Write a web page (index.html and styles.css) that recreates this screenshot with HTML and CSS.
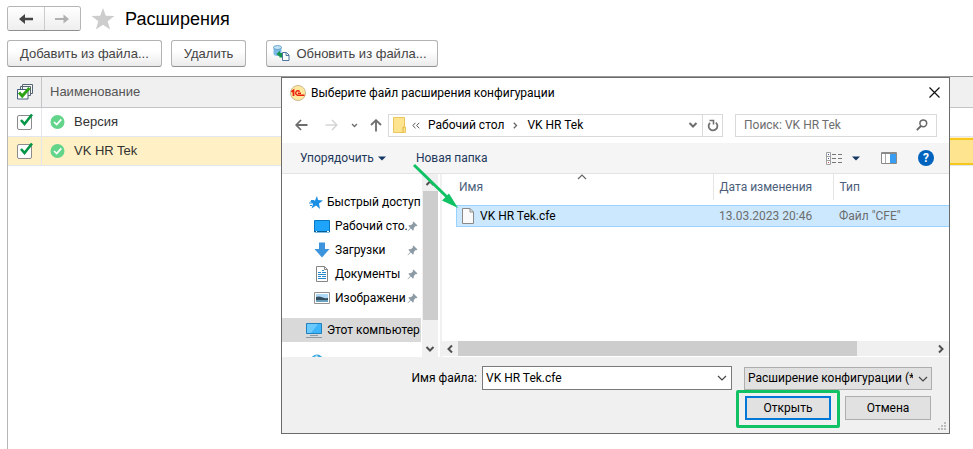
FILE: index.html
```html
<!DOCTYPE html>
<html lang="ru">
<head>
<meta charset="utf-8">
<title>Расширения</title>
<link rel="stylesheet" href="styles.css">
</head>
<body>
<svg class="defs" aria-hidden="true">
  <symbol id="tick" viewBox="0 0 18 18"><path d="M4 8 7.500 12 15 2.500" fill="none" stroke="#009646" stroke-width="2.6"/></symbol>
  <symbol id="ok" viewBox="0 0 14 14"><circle cx="7" cy="7" r="7" fill="#62d58b"/><path d="M3.500 7 6.200 9.600 10.800 4.400" fill="none" stroke="#fff" stroke-width="1.7"/></symbol>
  <symbol id="pin" viewBox="0 0 12 12"><path d="M7 0.500 11.500 5 10 5.800 9.400 5.500 7.500 7.600 7.200 10 6.300 10.300 4.200 8.200 1 11.300.5 10.900 3.600 7.500 1.600 5.500 2.200 4.700 4.600 4.400 6.500 2.500 6.200 1.600Z" fill="#8d9ba5"/></symbol>
  <symbol id="chev" viewBox="0 0 10 10"><path d="M1 3 5 7 9 3" fill="none" stroke="currentColor" stroke-width="1.200"/></symbol>
  <symbol id="bold-chev" viewBox="0 0 10 10"><path d="M1.500 3 5 6.500 8.500 3" fill="none" stroke="currentColor" stroke-width="2"/></symbol>
</svg>

<main class="page">
  <header class="heading">
    <div class="history">
      <button class="history-btn" aria-label="Назад"><svg width="16" height="12" viewBox="0 0 16 12"><path d="M1 6 7 1V4.800H15V7.200H7V11Z" fill="#444"/></svg></button>
      <button class="history-btn" aria-label="Вперёд"><svg width="16" height="12" viewBox="0 0 16 12"><path d="M15 6 9.500 1.500V5H1V7H9.500V10.500Z" fill="#b0b0b0"/></svg></button>
    </div>
    <svg class="star" width="24" height="22" viewBox="0 0 24 22"><path d="M12 0 14.800 7.800 23.500 8 16.700 13.300 19.100 21.500 12 16.700 4.900 21.500 7.300 13.300.5 8 9.200 7.800Z" fill="#cdcdcd"/></svg>
    <h1>Расширения</h1>
  </header>

  <div class="commands">
    <button class="command">Добавить из файла...</button>
    <button class="command">Удалить</button>
    <button class="command command-update">
      <svg width="17" height="17" viewBox="0 0 17 17"><path d="M.5 2.500V9C1 11.500 8 11.500 8.500 9V2.500Z" fill="#7ab9e6"/><ellipse cx="4.500" cy="2.500" rx="4" ry="2" fill="#c1e3f7" stroke="#5694be" stroke-width=".8"/><path d="M3.500 9 7 5.800V8H9V12.500H6.500V10.500H7V12Z" fill="#14944a"/><path d="M9.500 7.500H13.500L16 10V15.500H9.500Z" fill="#fff" stroke="#50759d"/><path d="M13 7.500V10.500H16" fill="none" stroke="#50759d"/></svg>
      Обновить из файла...
    </button>
  </div>

  <table class="extensions">
    <thead>
      <tr>
        <th class="col-check"><svg width="16" height="16" viewBox="0 0 16 16"><path d="M5.500 5V.5H15.500V9.500H13M3.500 5V2.500H13.500V11.500H11" fill="#f5f5f5" stroke="#566673"/><path d="M.5 5.500H11V15H.5Z" fill="#fff" stroke="#435c79"/><path d="M2 8.500 5.200 12 12.500 4" fill="none" stroke="#2fa316" stroke-width="3"/></svg></th>
        <th class="col-name">Наименование</th>
        <th></th>
      </tr>
    </thead>
    <tbody>
      <tr>
        <td class="col-check"><label class="check"><input type="checkbox" checked aria-label="Версия"><svg class="tick"><use href="#tick"/></svg></label></td>
        <td class="col-name"><span class="named"><svg class="ok"><use href="#ok"/></svg>Версия</span></td>
        <td></td>
      </tr>
      <tr class="selected">
        <td class="col-check"><label class="check"><input type="checkbox" checked aria-label="VK HR Tek"><svg class="tick"><use href="#tick"/></svg></label></td>
        <td class="col-name"><span class="named"><svg class="ok"><use href="#ok"/></svg>VK HR Tek</span></td>
        <td class="current"></td>
      </tr>
    </tbody>
  </table>
</main>

<section class="dialog" role="dialog" aria-labelledby="dialog-title">
  <header class="titlebar">
    <svg width="16" height="16" viewBox="0 0 16 16"><circle cx="8" cy="8" r="7.500" fill="#ffe9a0" stroke="#cdb98e"/><path d="M1.300 6.800 3.500 5.400V11" fill="none" stroke="#e8200c" stroke-width="1.800"/><path d="M9.600 6.600A2.200 2.200 0 1 0 7.800 10.200H14.500M7.800 8.300H11" fill="none" stroke="#e8200c" stroke-width="1.400"/></svg>
    <h2 id="dialog-title">Выберите файл расширения конфигурации</h2>
    <button class="close" aria-label="Закрыть"><svg width="11" height="11" viewBox="0 0 11 11"><path d="M.5.5 10.500 10.500M10.500.5.5 10.500" stroke="#111" stroke-width="1.200"/></svg></button>
  </header>

  <nav class="location">
    <button class="plain" aria-label="Назад"><svg width="13" height="12" viewBox="0 0 13 12"><path d="M12.500 6H1.500M6 1 1.200 6 6 11" fill="none" stroke="#6d6d6d" stroke-width="1.800"/></svg></button>
    <button class="plain" aria-label="Вперёд"><svg width="13" height="12" viewBox="0 0 13 12"><path d="M.5 6H11.500M7 1 11.800 6 7 11" fill="none" stroke="#d5d5d5" stroke-width="1.600"/></svg></button>
    <button class="plain recent" aria-label="Недавние"><svg width="7" height="7"><use href="#bold-chev"/></svg></button>
    <button class="plain" aria-label="Вверх"><svg width="12" height="13" viewBox="0 0 12 13"><path d="M6 12.500V1.500M1 6 6 1.200 11 6" fill="none" stroke="#6d6d6d" stroke-width="1.800"/></svg></button>
    <div class="address">
      <svg width="13" height="16" viewBox="0 0 13 16"><path d="M.5.5H11.500V9.500L12.500 10V15.500H.5Z" fill="#ffe48f" stroke="#eac65d"/><path d="M10 15.500V10H12" fill="none" stroke="#dcb23f"/></svg>
      <svg class="crumbs-more" width="8" height="7" viewBox="0 0 8 7"><path d="M3.500.8.8 3.500 3.500 6.200M7.300.8 4.600 3.500 7.300 6.200" fill="none" stroke="#555"/></svg>
      <a href="#">Рабочий стол</a>
      <svg width="5" height="7" viewBox="0 0 5 7"><path d="M.8.8 3.500 3.500.8 6.200" fill="none" stroke="#666" stroke-width="1.300"/></svg>
      <a href="#">VK HR Tek</a>
      <button class="plain address-drop" aria-label="Показать путь"><svg width="10" height="10"><use href="#bold-chev"/></svg></button>
      <button class="plain refresh" aria-label="Обновить"><svg width="12" height="13" viewBox="0 0 12 13"><path d="M3 3.800A4.400 4.400 0 1 0 8.800 3.600" fill="none" stroke="#707070" stroke-width="1.800"/><path d="M2.500 1.500H6.500V5.500" fill="none" stroke="#707070" stroke-width="1.600"/></svg></button>
    </div>
    <div class="search">
      <input type="text" placeholder="Поиск: VK HR Tek" aria-label="Поиск: VK HR Tek">
      <svg width="12" height="12" viewBox="0 0 12 12"><circle cx="7.300" cy="4.300" r="3.400" fill="none" stroke="#666" stroke-width="1.500"/><path d="M5 7 .8 11.200" stroke="#666" stroke-width="1.800"/></svg>
    </div>
  </nav>

  <div class="toolbar">
    <button class="plain tool">Упорядочить <svg width="8" height="5" viewBox="0 0 8 5"><path d="M0 .5H8L4 4.500Z" fill="#153763"/></svg></button>
    <button class="plain tool">Новая папка</button>
    <span class="toolbar-end">
      <button class="plain view" aria-label="Вид"><svg width="16" height="13" viewBox="0 0 16 13"><path d="M.5.5H4.500V12.500H.5ZM.5 4.500H4.500M.5 8.500H4.500" fill="#fff" stroke="#a0a0a0"/><path d="M2 2.500H3M2 6.500H3" stroke="#345fa8"/><path d="M2 10.500H3" stroke="#c43"/><path d="M6 2.500H10M12 2.500H16M6 6.500H10M12 6.500H16M6 10.500H10M12 10.500H16" stroke="#777"/></svg><svg width="8" height="5" viewBox="0 0 8 5"><path d="M0 .5H8L4 4.500Z" fill="#153763"/></svg></button>
      <button class="plain" aria-label="Область просмотра"><svg width="16" height="12" viewBox="0 0 16 12"><path d="M.5.5H15.500V11.500H.5Z" fill="#fff" stroke="#8a8a8a"/><path d="M0 1.500H16" stroke="#8a8a8a"/><path d="M4.500 2V11" stroke="#aaa"/><path d="M9 2H15V11H9Z" fill="#399df2"/></svg></button>
      <button class="plain help" aria-label="Справка">?</button>
    </span>
  </div>

  <div class="browser">
    <ul class="tree">
      <li class="node"><svg width="14" height="13" viewBox="0 0 14 13"><path d="M8 0 9 4 14 4.500 10 7.500 11 13 7 9.500 2.500 12.500 4 8 1 5 6 4.500Z" fill="#1a8fe3"/><path d="M0 7H3M1 9.500H3M2 4.500H5" stroke="#1a8fe3"/></svg>Быстрый доступ</li>
      <li class="node child"><svg width="16" height="13" viewBox="0 0 16 13"><path d="M.5.5H15.500V12H.5Z" fill="#1ea5fb" stroke="#0877bf"/><path d="M0 11.500H16" stroke="#075e98"/><path d="M2 11.500H3M13 11.500H15" stroke="#fff"/></svg><span>Рабочий сто.</span><svg class="pin"><use href="#pin"/></svg></li>
      <li class="node child"><svg width="16" height="16" viewBox="0 0 16 16"><path d="M5 .5H11V7H15.500L8 15.500.5 7H5Z" fill="#3b94dc"/></svg><span>Загрузки</span><svg class="pin"><use href="#pin"/></svg></li>
      <li class="node child"><svg width="16" height="16" viewBox="0 0 16 16"><path d="M2.500.5H10.500L13.500 3.500V15.500H2.500Z" fill="#fff" stroke="#858585"/><path d="M10.500.5V3.500H13.500" fill="none" stroke="#858585"/><path d="M4 6.500H7M8 4.500H10M8 6.500H12M4 8.500H12M4 10.500H7M8 10.500H12M4 12.500H12" stroke="#2788cc"/></svg><span>Документы</span><svg class="pin"><use href="#pin"/></svg></li>
      <li class="node child"><svg width="16" height="12" viewBox="0 0 16 12"><path d="M.5.5H15.500V11.500H.5Z" fill="#fff" stroke="#929292"/><path d="M2 2H14V6H2Z" fill="#afd9f4"/><path d="M2 5C6 3 9 7 14 6V8H2Z" fill="#344e60"/><path d="M2 8H14V10H2Z" fill="#68a0bd"/></svg><span>Изображени</span><svg class="pin"><use href="#pin"/></svg></li>
      <li class="node computer"><svg width="16" height="15" viewBox="0 0 16 15"><path d="M.5.5H15.500V10.500H.5Z" fill="#3eb5fb" stroke="#2181be"/><path d="M1 1H12L5 10H1Z" fill="#6cc9fc"/><path d="M4 12.500H12M0 14.500H16" stroke="#8a9ba7"/></svg>Этот компьютер</li>
      <li class="node network"><svg width="16" height="16" viewBox="0 0 16 16"><circle cx="8" cy="7" r="6.500" fill="#37a6dd"/><path d="M4 4 8 1 10 5 7 7Z" fill="#c5eaf7"/></svg></li>
    </ul>
    <div class="vscroll" aria-hidden="true">
      <svg class="up" width="10" height="10"><use href="#bold-chev"/></svg>
      <span class="vthumb"></span>
      <svg width="10" height="10"><use href="#bold-chev"/></svg>
    </div>
    <div class="listing">
      <table class="files">
        <thead><tr><th class="f-name">Имя<svg class="sort" width="10" height="10"><use href="#chev"/></svg></th><th class="f-date">Дата изменения</th><th class="f-type">Тип</th></tr></thead>
        <tbody><tr>
          <td><span class="file"><svg width="12" height="16" viewBox="0 0 12 16"><path d="M.5.5H8L11.500 4V15.500H.5Z" fill="#fafafa" stroke="#8a8a8a"/><path d="M8 .5V4H11.500" fill="none" stroke="#8a8a8a"/></svg>VK HR Tek.cfe</span></td>
          <td class="f-date"><span class="value">13.03.2023 20:46</span></td><td class="f-type"><span class="value">Файл "CFE"</span></td>
        </tr></tbody>
      </table>
      <div class="hscroll" aria-hidden="true">
        <svg class="left" width="10" height="10"><use href="#bold-chev"/></svg>
        <span class="htrack"><span class="hthumb"></span></span>
        <svg class="right" width="10" height="10"><use href="#bold-chev"/></svg>
      </div>
    </div>
  </div>

  <footer class="footer">
    <div class="choice">
      <label for="filename">Имя файла:</label>
      <div class="combo"><input id="filename" type="text" value="VK HR Tek.cfe"><button class="plain" aria-label="Показать список"><svg width="10" height="10"><use href="#chev"/></svg></button></div>
      <div class="filter"><select aria-label="Тип файла"><option>Расширение конфигурации (*</option></select><svg width="10" height="10"><use href="#chev"/></svg></div>
    </div>
    <div class="actions">
      <span class="highlight"><button class="action primary">Открыть</button></span>
      <button class="action">Отмена</button>
    </div>
    <svg class="grip" width="9" height="9" viewBox="0 0 9 9"><path d="M7 0H9V2H7ZM4 3H6V5H4ZM7 3H9V5H7ZM1 6H3V8H1ZM4 6H6V8H4ZM7 6H9V8H7Z" fill="#bcbcbc"/></svg>
  </footer>
  <svg class="pointer" width="48" height="48" viewBox="0 0 48 48"><path d="M2 2 36 35" stroke="#10c264" stroke-width="3"/><path d="M46 45 30 37.500 37 30.500Z" fill="#10c264"/></svg>
</section>
</body>
</html>
```
FILE: styles.css
```css
* { box-sizing: border-box; }
body { margin: 0; background: #fff; font: 13px/18px "Liberation Sans", Arial, sans-serif; color: #333; overflow: hidden; }
button, input, select { font: inherit; color: inherit; margin: 0; }
svg { flex: none; display: block; }
h1, h2 { margin: 0; font-weight: normal; }
.defs { position: absolute; width: 0; height: 0; }

.page { display: flex; flex-direction: column; height: 100vh; padding: 6px 0 0 7px; }
.heading { display: flex; align-items: center; height: 25px; }
.history { display: flex; border: 1px solid #b5b5b5; border-bottom-color: #8f8f8f; border-radius: 3px; width: 74px; height: 25px; overflow: hidden; }
.history-btn { flex: 1; display: flex; align-items: center; justify-content: center; padding: 0; border: 0; background: linear-gradient(#fff, #eee); }
.history-btn + .history-btn { border-left: 1px solid #ccc; }
.star { margin: 0 10px; }
h1 { font-size: 18px; line-height: 24px; color: #000; }
.commands { display: flex; gap: 9px; margin-top: 9px; }
.command { display: flex; align-items: center; justify-content: center; gap: 6px; height: 27px; padding: 0 12px; border: 1px solid #b3b3b3; border-bottom-color: #8f8f8f; border-radius: 3px; background: linear-gradient(#fff 40%, #ebebeb); color: #444; white-space: nowrap; }
.command-update { margin-left: 11px; padding: 0 10px 0 6px; }

.extensions { flex: 1; display: block; margin-top: 9px; border-collapse: collapse; border-top: 1px solid #999; border-left: 1px solid #b5b5b5; }
.extensions thead, .extensions tbody { display: block; }
.extensions tr { display: grid; grid-template-columns: 34px 1fr 1fr; height: 29px; border-bottom: 1px solid #e3e6ec; }
.extensions thead tr { height: 31px; background: #f0f0f0; border-color: #c4c4c4; }
.extensions th, .extensions td { display: flex; align-items: center; padding: 0; font-weight: normal; }
.extensions .col-check { justify-content: center; border-right: 1px solid #e3e6ec; }
.extensions th.col-check { border-color: #c4c4c4; }
.extensions .col-name { padding-left: 8px; color: #333; }
.extensions th.col-name { color: #555; }
.selected { background: #fff1c5; }
.extensions .current { margin-top: 1px; background: #ffe48f; border: 2px solid #f8c71d; border-right: 0; }
.named { display: flex; align-items: center; gap: 9px; }
.ok { width: 15px; height: 14px; }
.check { position: relative; display: flex; }
.check input { appearance: none; width: 15px; height: 15px; border: 1px solid #8b8b8b; border-radius: 2px; background: #fff; }
.tick { position: absolute; left: 0; top: -3px; width: 18px; height: 18px; }

.dialog { position: absolute; left: 281px; right: 23px; top: 77px; display: flex; flex-direction: column; border: 1px solid #6b6b6b; background: #fff; color: #000; font: 12px/16px Roboto, "Noto Sans", sans-serif; }
.plain { display: flex; align-items: center; justify-content: center; padding: 0; border: 0; background: none; }
.titlebar { display: flex; align-items: center; gap: 5px; height: 29px; padding: 0 9px 0 8px; }
h2 { font-size: 12px; line-height: 16px; white-space: nowrap; }
.close { display: flex; margin-left: auto; padding: 0; border: 0; background: none; }
.location { display: flex; align-items: center; height: 36px; padding: 0 12px 0 13px; color: #6d6d6d; }
.location > .plain + .plain { margin-left: 17px; }
.location > .recent + .plain { margin-left: 12px; }
.location > .plain.recent { margin-left: 13px; }
.address { flex: 1; display: flex; align-items: center; gap: 9px; height: 23px; margin-left: 6px; padding-left: 4px; border: 1px solid #d9d9d9; white-space: nowrap; }
.address a { color: #000; text-decoration: none; }
.crumbs-more { margin: 0 -1px 0 -3px; }
.address-drop { margin-left: auto; }
.refresh { width: 20px; height: 21px; margin-left: -5px; border-left: 1px solid #d9d9d9; }
.search { display: flex; align-items: center; width: 202px; height: 23px; margin-left: 12px; padding: 0 8px; border: 1px solid #d9d9d9; }
.search input { flex: 1; min-width: 0; padding: 0; border: 0; outline: 0; background: none; }
.search input::placeholder { color: #6d6d6d; }

.toolbar { display: flex; align-items: center; gap: 30px; height: 31px; padding: 0 15px 0 18px; background: #f5f5f5; border-bottom: 1px solid #e3e3e3; color: #1e395b; }
.tool { gap: 4px; white-space: nowrap; }
.toolbar-end { display: flex; align-items: center; gap: 21px; margin-left: auto; }
.view { gap: 10px; }
.help { width: 16px; height: 16px; border-radius: 50%; background: #0064bf; color: #fff; font-weight: bold; }

.browser { display: flex; height: 183px; overflow: hidden; }
.tree { width: 139px; margin: 0; padding: 16px 0 0; list-style: none; overflow: hidden; }
.node { display: flex; align-items: center; gap: 4px; height: 24px; padding-left: 27px; white-space: nowrap; }
.child { gap: 5px; padding: 0 3px 0 32px; }
.child span { flex: 1; min-width: 0; }
.pin { width: 11px; height: 11px; margin-left: -5px; }
.computer { margin: 8px 0; padding-left: 24px; gap: 5px; background: #d9d9d9; }
.vscroll { display: flex; flex-direction: column; align-items: center; width: 16px; margin-left: 1px; padding: 4px 0 3px; background: #f0f0f0; color: #505050; }
.vthumb { width: 15px; height: 129px; margin: 3px 0 auto; background: #cdcdcd; }
.up { transform: rotate(180deg); }
.listing { flex: 1; min-width: 0; display: flex; flex-direction: column; justify-content: space-between; margin-left: 2px; border-left: 2px solid #f0f0f0; }
.files { width: 100%; border-collapse: collapse; table-layout: fixed; }
.files th { position: relative; height: 26px; padding: 0 0 0 6px; text-align: left; font-weight: normal; color: #4c607a; }
.files th.f-name { width: 271px; padding-left: 17px; }
.files th.f-date { width: 120px; }
.files th.f-date, .files th.f-type { border-left: 1px solid #e5e5e5; }
.sort { position: absolute; top: -2px; left: 50%; transform: rotate(180deg); color: #666; }
.files tbody::before { content: ""; display: block; height: 5px; }
.files td { padding: 0; color: #6d6d6d; }
.files td:first-child { padding-left: 14px; color: #000; }
.file, .value { display: flex; align-items: center; gap: 6px; height: 22px; padding-left: 6px; background: #cce8ff; border: solid #99d1ff; border-width: 1px 0; }
.file { padding-left: 5px; border-left-width: 1px; }
.hscroll { display: flex; align-items: center; height: 15px; margin-bottom: 1px; padding: 0 3px; background: #f0f0f0; color: #505050; }
.htrack { flex: 1; height: 15px; margin: 0 3px; }
.hthumb { display: block; width: 84%; height: 15px; background: #cdcdcd; }
.left { transform: rotate(90deg); }
.right { transform: rotate(-90deg); }

.footer { position: relative; height: 76px; padding: 9px 17px 0 0; background: #f0f0f0; }
.choice { display: flex; align-items: center; justify-content: flex-end; }
.combo { display: flex; align-items: center; width: 250px; height: 24px; margin: 0 12px 0 5px; padding: 0 4px 0 3px; border: 1px solid #7a7a7a; background: #fff; }
.combo input { flex: 1; min-width: 0; padding: 0; border: 0; outline: 0; background: none; }
.filter { position: relative; width: 188px; }
.filter select { display: block; appearance: none; width: 100%; height: 23px; padding: 0 18px 0 3px; border: 1px solid #adadad; border-radius: 0; background: #e1e1e1; overflow: hidden; }
.filter svg { position: absolute; right: 4px; top: 7px; pointer-events: none; }
.combo svg, .filter svg { color: #444; }
.actions { display: flex; align-items: center; justify-content: flex-end; gap: 5px; padding-right: 1px; }
.highlight { padding: 3px 6px 5px; border: 3px solid #10c264; border-radius: 2px; }
.action { width: 86px; height: 24px; padding: 0; border: 1px solid #adadad; background: #e1e1e1; text-align: center; }
.primary { display: block; border: 2px solid #0078d7; }
.actions > .action { margin-bottom: 2px; }
.grip { position: absolute; right: 3px; bottom: 2px; }
.pointer { position: absolute; left: 130px; top: 85px; }
```
